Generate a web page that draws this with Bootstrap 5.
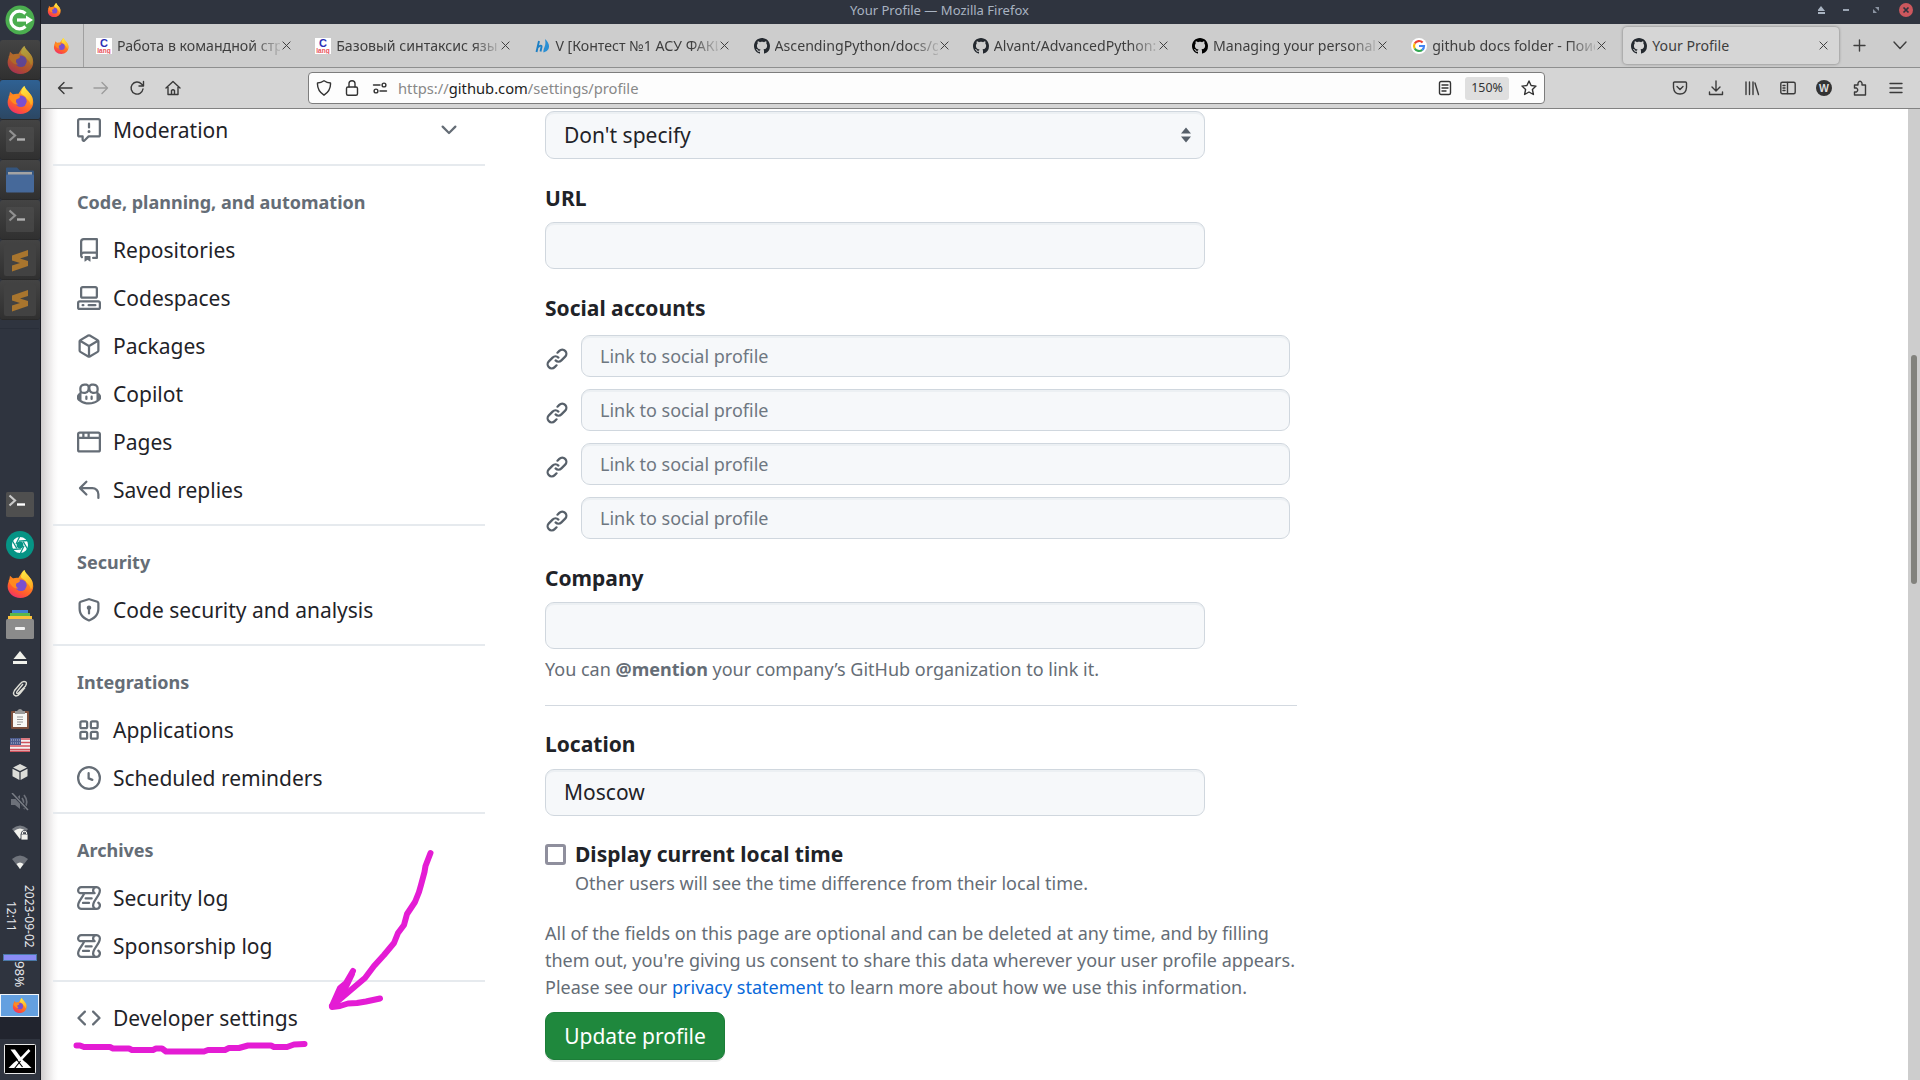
<!DOCTYPE html>
<html lang="en">
<head>
<meta charset="utf-8">
<title>Your Profile — Mozilla Firefox</title>
<link rel="stylesheet" href="https://cdn.jsdelivr.net/npm/bootstrap@5.3.0/dist/css/bootstrap.min.css">
<style>
html,body{height:1080px;overflow:hidden}
body{width:1920px;font-family:"Noto Sans",sans-serif;color:#1f2328;background:#fff}
svg{display:block;flex:none}
/* dock */
.dock{width:41px;padding-right:1px;background:#2f343f;border-right:1px solid #1b1d24;color:#e4e6ea}
.dock-slot{width:40px;height:40px}
.tile{background:linear-gradient(#444,#303030);border-radius:3px;border-bottom:1px solid #292929}
.tile.on{background:linear-gradient(#2f6193,#2c4763)}
.tile .dim{opacity:.6}
.dock-gap{height:172px;padding-top:8px}
.dock-gap::before{content:"";display:block;border-top:1px solid #292e39}
.t9{margin-top:9px}.t11{margin-top:11px}.t12{margin-top:12px}.t13{margin-top:13px}.t14{margin-top:14px}.t15{margin-top:15px}
.vert{writing-mode:vertical-rl;white-space:nowrap}
.clockbox{height:63px;margin-top:15px;font-size:12px;line-height:18px;width:40px}
.clockbox .vert{height:64px;text-align:center}
.meter{width:34px;height:7px;margin-top:7px;background:#8a8cf5;border:1px solid #4a79a8}
.batt{height:27px;font-size:13.3px;line-height:20px}
.task{width:39px;height:23px;margin-top:6px;background:#64a0e0;border:1px solid #f3f6fa}
.darkgap{width:40px;height:22px;background:#21242e}
.xlogo{margin-top:5px}
/* window chrome */
.titlebar{height:24px;background:#2f343f;color:#a9b3c1;font-size:13.05px;line-height:21px;padding-left:6px}
.titlebar .winicon{margin-top:3px}
.tabstrip{height:44px;background:#cdcdcd;border-bottom:1px solid #8e8f8f;color:#3e3e3e;font-size:14.15px}
.pinned{width:43px;height:43px;border-right:1px solid #a0a0a0;padding-right:3px}
.tabx{width:219.2px;height:43px;padding-left:12px;padding-right:5px}
.tab-title{margin:1px 2px 0 5px;width:163px;white-space:nowrap;overflow:hidden;line-height:24px;-webkit-mask-image:linear-gradient(90deg,#000 136px,transparent 168px)}
.tabx.now{width:216px;height:37px;background:#d6d6d6;border-radius:4px;box-shadow:0 0 3px #777;padding-left:8px;padding-right:11px;margin-left:5px}
.tabx.now .tab-title{-webkit-mask-image:none}
.toolbar{height:41px;background:#d5d5d5;border-bottom:1px solid #828282;color:#3a3a3a;padding-left:16px;padding-right:16px}
.urlbar{width:1237px;height:32px;background:#fdfdfd;border:1px solid #7d7d7d;border-radius:4px;margin-left:127px;font-size:14.72px;color:#888}
.urlbar b{font-weight:400;color:#1c1c1c}
.zoomchip{width:44px;height:23px;background:#dfdfdf;border-radius:3px;color:#333;font-size:12.4px;line-height:22px}
.ln{fill:none;stroke:currentColor;stroke-width:1.4;stroke-linecap:round;stroke-linejoin:round}
.faded{color:#9c9c9c}
.g20{margin-left:20px}
/* page */
.pagebody{height:971px;background:#fff}
.edge{width:17px;margin-right:-5px;background:linear-gradient(90deg,#cfcccc,#e4e2e2 35%,#f8f7f7 75%,#fff)}
.sidenav{width:432px;font-size:21px;color:#1f2328;margin-top:-3px}
.nav-row{height:48px;padding-left:24px;line-height:48px}
.nav-row svg{color:#656d76;margin-right:12px}
.nav-row .chev{margin:0 24px 0 auto}
.sep{height:2px;background:#e6eaee;margin-top:10px}
.dev{margin-top:12px}
.grp{height:60px;padding-left:24px;padding-top:22px;font-size:18px;line-height:28px;font-weight:700;color:#656d76}
.formcol{width:752px;margin-left:60px;padding-top:2px}
.formcol .form-label{font-size:21px;font-weight:700;line-height:32px;margin:23px 0 8px;display:block}
.formcol .form-control,.formcol .form-select{width:660px;height:47px;padding:0 18px 1px;font-size:21px;line-height:44px;color:#1f2328;background-color:#f6f8fa;border:1px solid #d0d7de;border-radius:9px;box-shadow:inset 0 2px 0 rgba(208,215,222,.25)}
.formcol .form-select{height:48px;padding-bottom:0;background-image:none;line-height:46px}
.social .form-control{width:709px;height:42px;padding-bottom:0;font-size:18px}
.social .form-control::placeholder{color:#6e7781;opacity:1}
.social svg{color:#57606a;margin:6px 12px 0 0}
.social{gap:12px}
.note18{font-size:18px;line-height:27px;color:#656d76}
.formcol .form-check-input{width:21px;height:21px;border:3px solid #8f8f9d;border-radius:3px;margin:0}
.btn.save{width:180px;height:48px;font-size:21px;line-height:44px;padding:0;background:#1f883d;border:1px solid #1c7d38;border-radius:9px;color:#fff;margin-top:11px;box-shadow:0 2px 0 rgba(31,35,40,.1)}
.rule{height:1px;background:#d3d9e0;margin-top:22px}
.scroller{width:12px;background:#cdcdcd}
.thumb{width:6px;height:229px;margin:246px 0 0 3px;background:#82827d;border-radius:3px}
.scribble{position:absolute;left:0;top:0;pointer-events:none}
</style>
<script src="https://cdn.jsdelivr.net/npm/bootstrap@5.3.0/dist/js/bootstrap.bundle.min.js"></script>
</head>
<body class="d-flex">
<svg width="0" height="0" class="position-absolute">
<defs>
<linearGradient id="fo" x1=".8" y1="0" x2=".3" y2="1"><stop offset="0" stop-color="#ffd43a"/><stop offset=".4" stop-color="#ff8a1e"/><stop offset=".75" stop-color="#ff5a2e"/><stop offset="1" stop-color="#f0306a"/></linearGradient>
<linearGradient id="fy" x1="0" y1="0" x2=".3" y2="1"><stop offset="0" stop-color="#fff04a"/><stop offset="1" stop-color="#ffb022"/></linearGradient>
<symbol id="fox" viewBox="0 0 32 32"><path d="M3 13C4 10 4.500 8 4.500 6.500L8.500 10C10 9 12 8.500 14 9C17 5 18 2 21 0C22 4 28 8 30 13C34 23 27 32 16.500 32C6 32-1 23 3 13Z" fill="url(#fo)"/><path d="M17 8C18 4 19 2 21 0C22 4 28 8 30 13C31 17 30 20 28.500 22C27 16 23 15 22 12C20 10 18 10 17 8Z" fill="url(#fy)"/><circle cx="17" cy="17.500" r="6.600" fill="#7a4fd0"/><path d="M3 12C7 9 12 8.500 16 12C16 14 14 14.500 12 15C11 17 11 19 14 21C10 22 5 18 3 12Z" fill="#ff8a20"/></symbol>
<symbol id="gh" viewBox="0 0 16 16"><path fill="currentColor" d="M8 0C3.580 0 0 3.580 0 8c0 3.540 2.290 6.530 5.470 7.590.4.070.55-.17.55-.38 0-.19-.01-.82-.01-1.490-2.010.37-2.530-.49-2.690-.94-.09-.23-.48-.94-.82-1.130-.28-.15-.68-.52-.01-.53.63-.01 1.080.58 1.230.82.72 1.210 1.870.87 2.330.66.07-.52.28-.87.51-1.070-1.780-.2-3.640-.89-3.640-3.950 0-.87.31-1.590.82-2.150-.08-.2-.36-1.020.08-2.120 0 0 .67-.21 2.200.82.64-.18 1.320-.27 2-.27s1.360.09 2 .27c1.530-1.040 2.200-.82 2.200-.82.44 1.100.16 1.920.08 2.120.51.56.82 1.270.82 2.150 0 3.070-1.870 3.750-3.650 3.950.29.25.54.73.54 1.480 0 1.070-.01 1.930-.01 2.200 0 .21.15.46.55.38A8.010 8.010 0 0 0 16 8c0-4.420-3.580-8-8-8Z"/></symbol>
<symbol id="x" viewBox="0 0 10 10"><path class="ln" style="stroke-width:1.1" d="M1 1L9 9M9 1L1 9"/></symbol>
<symbol id="clang" viewBox="0 0 16 16"><rect width="16" height="16" fill="#fff"/><text x="8" y="9" font-size="11" font-weight="700" text-anchor="middle" fill="#2b2fb5" font-family="Liberation Sans">C</text><text x="8" y="14.500" font-size="6.500" font-weight="700" text-anchor="middle" fill="#e8505a" font-family="Liberation Sans">lang</text></symbol>
<symbol id="term" viewBox="0 0 28 25"><rect width="28" height="25" rx="1.500" fill="#4f4f4f"/><path d="M3.500 3.500L9 8.500L3.500 13.500" fill="none" stroke="#c9c9c9" stroke-width="2.200"/><path d="M11 12.500H19" stroke="#fff" stroke-width="2.400"/></symbol>
<symbol id="subl" viewBox="0 0 32 32"><rect width="32" height="32" rx="2" fill="#424242"/><path d="M8 11.500L24 6V12L16 14.500L24 17V22L8 27.500V21.500L16 19L8 16.500Z" fill="#a8752e"/></symbol>
<symbol id="log" viewBox="0 0 16 16"><path fill="currentColor" d="M5 8.250a.75.75 0 0 1 .75-.75h4a.75.75 0 0 1 0 1.500h-4A.75.75 0 0 1 5 8.250ZM4 10.500A.75.75 0 0 0 4 12h4a.75.75 0 0 0 0-1.500H4Z M13-.005c1.654 0 3 1.328 3 3 0 .982-.338 1.933-.783 2.818-.443.879-1.028 1.758-1.582 2.588l-.011.017c-.568.853-1.104 1.659-1.501 2.446-.398.789-.623 1.494-.623 2.136a1.500 1.500 0 1 0 2.333-1.248.75.75 0 0 1 .834-1.246A3 3 0 0 1 13 16H3a3 3 0 0 1-3-3c0-1.582.891-3.135 1.777-4.506.209-.322.418-.637.623-.946.473-.709.923-1.386 1.287-2.048H2.510c-.576 0-1.381-.133-1.907-.783A2.680 2.680 0 0 1 0 2.995a3 3 0 0 1 3-3Zm0 1.500a1.500 1.500 0 0 0-1.500 1.500c0 .476.223.834.667 1.132A.75.75 0 0 1 11.750 5.500H5.368c-.467 1.003-1.141 2.015-1.773 2.963-.192.289-.381.571-.558.845C2.130 10.711 1.500 11.916 1.500 13A1.500 1.500 0 0 0 3 14.500h7.401A2.989 2.989 0 0 1 10 13c0-.979.338-1.928.784-2.812.441-.874 1.023-1.748 1.575-2.576l.017-.026c.568-.853 1.103-1.658 1.501-2.448.398-.79.623-1.497.623-2.143 0-.838-.669-1.500-1.500-1.500Zm-10 0a1.500 1.500 0 0 0-1.500 1.500c0 .321.1.569.27.778.097.12.325.227.74.227h7.674A2.737 2.737 0 0 1 10 2.995c0-.546.146-1.059.401-1.500Z"/></symbol>
<symbol id="link" viewBox="0 0 16 16"><path fill="currentColor" d="m7.775 3.275 1.250-1.250a3.500 3.500 0 1 1 4.950 4.950l-2.500 2.500a3.500 3.500 0 0 1-4.950 0 .751.751 0 0 1 .018-1.042.751.751 0 0 1 1.042-.018 1.998 1.998 0 0 0 2.830 0l2.500-2.500a2.002 2.002 0 0 0-2.830-2.830l-1.250 1.250a.751.751 0 0 1-1.042-.018.751.751 0 0 1-.018-1.042Zm-4.690 9.640a1.998 1.998 0 0 0 2.830 0l1.250-1.250a.751.751 0 0 1 1.042.018.751.751 0 0 1 .018 1.042l-1.250 1.250a3.500 3.500 0 1 1-4.950-4.950l2.500-2.500a3.500 3.500 0 0 1 4.950 0 .751.751 0 0 1-.018 1.042.751.751 0 0 1-1.042.018 1.998 1.998 0 0 0-2.830 0l-2.500 2.500a1.998 1.998 0 0 0 0 2.830Z"/></symbol>
</defs>
</svg>

<aside class="dock d-flex flex-column align-items-center flex-shrink-0">
<div class="dock-slot d-flex align-items-center justify-content-center"><svg width="30" height="30" viewBox="0 0 30 30"><circle cx="15" cy="15" r="14.500" fill="#4bae4f"/><path d="M20.500 8.500A8.800 8.800 0 1 0 20.500 21.500" fill="none" stroke="#fff" stroke-width="3.200"/><path d="M12 15H22" stroke="#fff" stroke-width="3.200"/><path d="M21 10.500L28 15L21 19.500Z" fill="#fff"/></svg></div>
<div class="dock-slot tile d-flex align-items-center justify-content-center"><svg class="dim" width="28" height="28"><use href="#fox"/></svg></div>
<div class="dock-slot tile on d-flex align-items-center justify-content-center"><svg width="28" height="28"><use href="#fox"/></svg></div>
<div class="dock-slot tile d-flex align-items-center justify-content-center"><svg class="dim" width="28" height="25"><use href="#term"/></svg></div>
<div class="dock-slot tile d-flex align-items-center justify-content-center"><svg width="28" height="26" viewBox="0 0 28 26"><path d="M0 1.500Q0 .5 1 .5H11L14 3.500H27Q28 3.500 28 4.500V12H0Z" fill="#35557d"/><rect x="2" y="5" width="24" height="5" fill="#a3a3a3"/><rect y="7.500" width="28" height="18" rx="1" fill="#46699a"/></svg></div>
<div class="dock-slot tile d-flex align-items-center justify-content-center"><svg class="dim" width="28" height="25"><use href="#term"/></svg></div>
<div class="dock-slot tile d-flex align-items-center justify-content-center"><svg width="32" height="32"><use href="#subl"/></svg></div>
<div class="dock-slot tile d-flex align-items-center justify-content-center"><svg width="32" height="32"><use href="#subl"/></svg></div>
<div class="dock-gap w-100"></div>
<svg width="28" height="25"><use href="#term"/></svg>
<svg class="t14" width="28" height="28" viewBox="0 0 28 28"><circle cx="14" cy="14" r="14" fill="#069485"/><circle cx="14" cy="14" r="5.700" fill="none" stroke="#fff" stroke-width="4.600"/><g stroke="#069485" stroke-width="1.300"><path d="M14 5L10 13"/><path d="M21.800 9.500L12.800 10.200"/><path d="M21.800 18.500L17.200 10.600"/><path d="M14 23L18 15"/><path d="M6.200 18.500L15.200 17.800"/><path d="M6.200 9.500L10.800 17.400"/></g></svg>
<svg class="t11" width="28" height="28"><use href="#fox"/></svg>
<svg class="t12" width="28" height="29" viewBox="0 0 28 29"><rect x="6" width="16" height="6" fill="#3f7fd0"/><rect x="4" y="3" width="20" height="6" fill="#5cb84a"/><rect x="2" y="6" width="24" height="6" fill="#fbc23c"/><rect y="9" width="28" height="20" rx="1.500" fill="#8b8b8b"/><rect x="9" y="17" width="10" height="3" rx="1" fill="#f2f2f2"/></svg>
<svg class="t12" width="14" height="14" viewBox="0 0 14 14" fill="#f0f0ea"><path d="M7 0L13.500 8H.5ZM0 10H14V13H0Z"/></svg>
<svg class="t15" width="16" height="17" viewBox="0 0 16 17"><path d="M11 4L5 11.500Q4 14 6 13.500L13.500 6Q16 1.500 12 1.500Q10 1.500 8 4L2.500 10.500Q0 15 4 16Q6 16 8 13.500L13 7.500" fill="none" stroke="#deded6" stroke-width="1.400"/></svg>
<svg class="t12" width="18" height="20" viewBox="0 0 18 20"><rect y="2" width="18" height="18" rx="1" fill="#7c4f3d"/><rect x="2" y="4" width="14" height="14" fill="#f7f7f5"/><path d="M4 2H6Q9-2 12 2H14V5H4Z" fill="#9a9a9a"/><path d="M6 8H12M6 10.500H12M6 13H12M6 15.500H10" stroke="#999"/></svg>
<svg class="t9" width="20" height="14" viewBox="0 0 20 14"><rect width="20" height="14" fill="#f4f0f0"/><path d="M0 1H20M0 4.500H20M0 8H20M0 11.500H20M0 13.500H20" stroke="#d0525c" stroke-width="1.500"/><rect width="11" height="7" fill="#4c5b8c"/><path d="M1 2H10M1 5H10" stroke="#b6bdd4" stroke-dasharray="1 1"/></svg>
<svg class="t12" width="16" height="16" viewBox="0 0 16 16"><path d="M8 0L15 3.500L8 7L1 3.500ZM.5 4.800L7.400 8.200V16L.5 12.300ZM15.500 4.800L8.600 8.200V16L15.500 12.300Z" fill="#dcdcd8"/></svg>
<svg class="t13" width="18" height="18" viewBox="0 0 18 18"><path d="M0 6H4L9 2V16L4 12H0Z" fill="#6d717a"/><path d="M11 5Q14 9 11 13M13 2Q18.500 9 13 16" fill="none" stroke="#6d717a" stroke-width="1.700"/><path d="M1 0L17 17" stroke="#2f343f" stroke-width="3"/><path d="M1 0L17 17" stroke="#7a7e86" stroke-width="1.500"/></svg>
<svg class="t14" width="16" height="16" viewBox="0 0 16 16"><path d="M0 4Q8-3 16 4L8 14Z" fill="#777b82"/><path d="M2 6Q8 1 14 6L8 14Z" fill="#f3f3ef"/><rect x="9" y="9" width="7" height="6" fill="#f3f3ef" stroke="#2f343f" stroke-width=".8"/><path d="M10.500 9V7.500Q12.500 5 14.500 7.500V9" fill="none" stroke="#2f343f" stroke-width="2.600"/><path d="M10.500 9V7.500Q12.500 5 14.500 7.500V9" fill="none" stroke="#f3f3ef" stroke-width="1.200"/></svg>
<svg class="t14" width="16" height="14" viewBox="0 0 16 14"><path d="M0 4Q8-3 16 4L8 14Z" fill="#6f737b"/><path d="M4.500 9Q8 6 11.500 9L8 14Z" fill="#f3f3ef"/></svg>
<div class="clockbox d-flex justify-content-center"><div class="vert">12:11</div><div class="vert">2023-09-02</div></div>
<div class="meter"></div>
<div class="vert batt">98%</div>
<div class="task d-flex align-items-center justify-content-center"><svg width="15" height="15"><use href="#fox"/></svg></div>
<div class="darkgap"></div>
<svg width="32" height="30" class="xlogo" viewBox="0 0 32 30"><rect x=".5" y=".5" width="31" height="29" rx="1" fill="#000" stroke="#e8e8e8"/><path d="M4.500 24Q10 18 16 14Q22 18 27.500 24Z" fill="#fff"/><path d="M25.500 6L16 16" fill="none" stroke="#fff" stroke-width="2.600"/><path d="M6.500 5.500H11L22.500 21L18.500 22Z" fill="#fff"/><path d="M16.500 17L10.500 24.500M11.500 14L18.500 23" stroke="#000" stroke-width="1.200"/></svg>
</aside>

<div class="flex-grow-1 d-flex flex-column" style="min-width:0">
<header class="titlebar d-flex">
<svg class="winicon" width="14" height="14"><use href="#fox"/></svg>
<div class="flex-grow-1 text-center">Your Profile — Mozilla Firefox</div>
<svg width="102" height="22" viewBox="1818 0 102 22"><path d="M1821 6L1825 11H1817ZM1817 12H1825V14H1817Z" fill="#a9b3c1"/><path d="M1843 10H1849" stroke="#a9b3c1" stroke-width="1.800"/><path d="M1875 7H1879V11ZM1873 9V13H1877Z" fill="#8b93a1"/><circle cx="1906" cy="10" r="7" fill="#cc575d"/><path d="M1903.500 7.500L1908.500 12.500M1908.500 7.500L1903.500 12.500" stroke="#2f343f" stroke-width="1.700"/></svg>
</header>

<nav class="tabstrip d-flex align-items-center">
<div class="pinned d-flex align-items-center justify-content-center"><svg width="16" height="16"><use href="#fox"/></svg></div>
<div class="tabx d-flex align-items-center"><svg width="16" height="16"><use href="#clang"/></svg><span class="tab-title">Работа в командной стр</span><svg width="9" height="9"><use href="#x"/></svg></div>
<div class="tabx d-flex align-items-center"><svg width="16" height="16"><use href="#clang"/></svg><span class="tab-title">Базовый синтаксис язы</span><svg width="9" height="9"><use href="#x"/></svg></div>
<div class="tabx d-flex align-items-center"><svg width="16" height="16" viewBox="0 0 16 16"><path d="M5 3L2.500 14M3.500 9.500Q8 6 7.500 9L6.500 13.500" fill="none" stroke="#1c7fc4" stroke-width="1.900"/><path d="M11 1Q16.500 6 14.500 11Q13 14 9.500 14.500Q9 12 10.500 9Q12 6 11 1Z" fill="#2a8fd4"/></svg><span class="tab-title">V [Контест №1 АСУ ФАКИ</span><svg width="9" height="9"><use href="#x"/></svg></div>
<div class="tabx d-flex align-items-center"><svg width="16" height="16" color="#24292f"><use href="#gh"/></svg><span class="tab-title">AscendingPython/docs/g</span><svg width="9" height="9"><use href="#x"/></svg></div>
<div class="tabx d-flex align-items-center"><svg width="16" height="16" color="#24292f"><use href="#gh"/></svg><span class="tab-title">Alvant/AdvancedPython:</span><svg width="9" height="9"><use href="#x"/></svg></div>
<div class="tabx d-flex align-items-center"><svg width="16" height="16" color="#000"><use href="#gh"/></svg><span class="tab-title">Managing your personal</span><svg width="9" height="9"><use href="#x"/></svg></div>
<div class="tabx d-flex align-items-center"><svg width="16" height="16" viewBox="0 0 16 16"><circle cx="8" cy="8" r="8" fill="#fff"/><g fill="none" stroke-width="2.200"><path d="M11.600 4.500A5 5 0 0 0 3.700 5.500" stroke="#ea4335"/><path d="M3.700 5.500A5 5 0 0 0 3.700 10.500" stroke="#fbbc05"/><path d="M3.700 10.500A5 5 0 0 0 11.300 11.800" stroke="#34a853"/><path d="M11.300 11.800A5 5 0 0 0 13 8H8" stroke="#4285f4"/></g></svg><span class="tab-title">github docs folder - Поис</span><svg width="9" height="9"><use href="#x"/></svg></div>
<div class="tabx now d-flex align-items-center"><svg width="16" height="16" color="#24292f"><use href="#gh"/></svg><span class="tab-title">Your Profile</span><svg class="ms-auto" width="9" height="9"><use href="#x"/></svg></div>
<svg class="ln" style="margin-left:14px" width="13" height="13" viewBox="0 0 13 13"><path d="M6.500 1V12M1 6.500H12"/></svg>
<svg class="ln ms-auto" style="margin-right:13px" width="14" height="9" viewBox="0 0 14 9"><path d="M1 1L7 7.500L13 1"/></svg>
</nav>

<div class="toolbar d-flex align-items-center">
<svg class="ln" width="16" height="16" viewBox="0 0 16 16"><path d="M15 8H1.500M7 2.500L1.500 8L7 13.500"/></svg>
<svg class="ln g20 faded" width="16" height="16" viewBox="0 0 16 16"><path d="M1 8H14.500M9 2.500L14.500 8L9 13.500"/></svg>
<svg class="ln g20" width="16" height="16" viewBox="0 0 16 16"><path d="M14 9A6 6 0 1 1 12.500 4L14 5.500M14.500 1.500V6H10"/></svg>
<svg class="ln g20" width="16" height="16" viewBox="0 0 16 16"><path d="M1 8L8 1.500L15 8M3 7V14.500H13V7M6.500 14.500V10.500Q8 9 9.500 10.500V14.500"/></svg>
<div class="urlbar d-flex align-items-center">
<svg class="ln" style="margin-left:7px;color:#333" width="16" height="16" viewBox="0 0 16 16"><path d="M8 .8Q11 3 14.500 3Q15 10.500 8 15.200Q1 10.500 1.500 3Q5 3 8 .8Z"/></svg>
<svg class="ln" style="margin-left:12px;color:#333" width="16" height="16" viewBox="0 0 16 16"><rect x="2.500" y="7" width="11" height="8.300" rx="1.500"/><path d="M5 7V3.500Q5 .7 8 .7Q11 .7 11 3.500V7"/></svg>
<svg class="ln" style="margin-left:12px;color:#333" width="16" height="16" viewBox="0 0 16 16"><path d="M1.500 5H8M8 11H14.500"/><circle cx="12" cy="5" r="1.900"/><circle cx="4" cy="11" r="1.900"/></svg>
<span style="margin-left:10px">https://<b>github.com</b>/settings/profile</span>
<svg class="ln ms-auto" style="color:#333" width="14" height="16" viewBox="0 0 14 16"><rect x="1.500" y="1.500" width="11" height="13" rx="1.500"/><path d="M4 5H10M4 8H10M4 11H8"/></svg>
<div class="zoomchip text-center" style="margin-left:13px">150%</div>
<svg class="ln" style="margin:0 7px 0 12px;color:#333" width="16" height="16" viewBox="0 0 16 16"><path d="M8 1L10.100 5.500L15 6.100L11.400 9.500L12.400 14.500L8 12L3.600 14.500L4.600 9.500L1 6.100L5.900 5.500Z"/></svg>
</div>
<div class="d-flex ms-auto" style="gap:20px">
<svg class="ln" width="16" height="16" viewBox="0 0 16 16"><path d="M1.500 3Q1.500 2 2.500 2H13.500Q14.500 2 14.500 3V7.500Q14 14 8 14Q2 14 1.500 7.500ZM5 6.500L8 9.500L11 6.500"/></svg>
<svg class="ln" width="16" height="16" viewBox="0 0 16 16"><path d="M8 1V10.500M4 7L8 11L12 7M1.500 12V14.500H14.500V12"/></svg>
<svg class="ln" width="16" height="16" viewBox="0 0 16 16"><path d="M2 2V14.500M5.500 2V14.500M9 2V14.500M11 3L14.500 14.500"/></svg>
<svg class="ln" width="16" height="16" viewBox="0 0 16 16"><rect x=".8" y="2.200" width="14.400" height="11.600" rx="1.500"/><path d="M7.500 2.500V13.500M3 5.500H5M3 8H5M3 10.500H5"/></svg>
<svg width="16" height="16" viewBox="0 0 16 16"><circle cx="8" cy="8" r="8" fill="#333"/><text x="8" y="12" font-size="10.500" font-weight="700" text-anchor="middle" fill="#dcdcdc" font-family="Liberation Sans">W</text></svg>
<svg class="ln" width="16" height="16" viewBox="0 0 16 16"><path d="M2.500 5H6V3Q8-.5 10 3V5H13.500V15H2.500V12H4.500Q7 10 4.500 8H2.500Z"/></svg>
<svg class="ln" width="16" height="16" viewBox="0 0 16 16"><path d="M2 3.500H14M2 8H14M2 12.500H14"/></svg>
</div>
</div>

<main class="pagebody d-flex overflow-hidden">
<div class="edge flex-shrink-0"></div>
<nav class="sidenav flex-shrink-0">
<div class="nav-row d-flex align-items-center"><svg width="24" height="24" viewBox="0 0 16 16" fill="currentColor"><path d="M0 1.750C0 .784.784 0 1.750 0h12.500C15.216 0 16 .784 16 1.750v9.500A1.750 1.750 0 0 1 14.250 13H8.060l-2.573 2.573A1.458 1.458 0 0 1 3 14.543V13H1.750A1.750 1.750 0 0 1 0 11.250Zm1.750-.25a.25.25 0 0 0-.25.25v9.500c0 .138.112.25.25.25h2a.75.75 0 0 1 .75.75v2.190l2.720-2.720a.749.749 0 0 1 .53-.22h6.500a.25.25 0 0 0 .25-.25v-9.500a.25.25 0 0 0-.25-.25Zm7 2.250v2.500a.75.75 0 0 1-1.500 0v-2.500a.75.75 0 0 1 1.500 0ZM9 9a1 1 0 1 1-2 0 1 1 0 0 1 2 0Z"/></svg>Moderation<svg class="chev" width="24" height="24" viewBox="0 0 16 16" fill="currentColor"><path d="M12.780 5.220a.749.749 0 0 1 0 1.060l-4.250 4.250a.749.749 0 0 1-1.060 0L3.220 6.280a.749.749 0 1 1 1.060-1.060L8 8.939l3.720-3.719a.749.749 0 0 1 1.060 0Z"/></svg></div>
<div class="sep"></div><div class="grp">Code, planning, and automation</div>
<div class="nav-row d-flex align-items-center"><svg width="24" height="24" viewBox="0 0 16 16" fill="currentColor"><path d="M2 2.500A2.500 2.500 0 0 1 4.500 0h8.750a.75.75 0 0 1 .75.75v12.500a.75.75 0 0 1-.75.75h-2.500a.75.75 0 0 1 0-1.500h1.750v-2h-8a1 1 0 0 0-.714 1.700.75.75 0 1 1-1.072 1.050A2.495 2.495 0 0 1 2 11.500Zm10.500-1h-8a1 1 0 0 0-1 1v6.708A2.486 2.486 0 0 1 4.500 9h8ZM5 12.250a.25.25 0 0 1 .25-.25h3.500a.25.25 0 0 1 .25.25v3.250a.25.25 0 0 1-.4.2l-1.450-1.087a.249.249 0 0 0-.3 0L5.400 15.700a.25.25 0 0 1-.4-.2Z"/></svg>Repositories</div>
<div class="nav-row d-flex align-items-center"><svg width="24" height="24" viewBox="0 0 16 16" fill="currentColor"><path d="M0 11.250c0-.966.784-1.750 1.750-1.750h12.500c.966 0 1.750.784 1.750 1.750v3A1.750 1.750 0 0 1 14.250 16H1.750A1.750 1.750 0 0 1 0 14.250Zm2-9.500C2 .784 2.784 0 3.750 0h8.500C13.216 0 14 .784 14 1.750v5a1.750 1.750 0 0 1-1.750 1.750h-8.500A1.750 1.750 0 0 1 2 6.750Zm1.750-.25a.25.25 0 0 0-.25.25v5c0 .138.112.25.25.25h8.500a.25.25 0 0 0 .25-.25v-5a.25.25 0 0 0-.25-.25Zm-2 9.500a.25.25 0 0 0-.25.25v3c0 .138.112.25.25.25h12.500a.25.25 0 0 0 .25-.25v-3a.25.25 0 0 0-.25-.25Z M7 12.750a.75.75 0 0 1 .75-.75h4.500a.75.75 0 0 1 0 1.500h-4.500a.75.75 0 0 1-.75-.75Zm-4 0a.75.75 0 0 1 .75-.75h.5a.75.75 0 0 1 0 1.500h-.5a.75.75 0 0 1-.75-.75Z"/></svg>Codespaces</div>
<div class="nav-row d-flex align-items-center"><svg width="24" height="24" viewBox="0 0 16 16" fill="currentColor"><path d="m8.878.392 5.250 3.045c.54.314.872.89.872 1.514v6.098a1.750 1.750 0 0 1-.872 1.514l-5.250 3.045a1.750 1.750 0 0 1-1.756 0l-5.250-3.045A1.750 1.750 0 0 1 1 11.049V4.951c0-.624.332-1.201.872-1.514L7.122.392a1.750 1.750 0 0 1 1.756 0ZM7.875 1.690l-4.630 2.685L8 7.133l4.755-2.758-4.630-2.685a.248.248 0 0 0-.25 0ZM2.500 5.677v5.372c0 .09.047.171.125.216l4.625 2.683V8.432Zm6.250 8.271 4.625-2.683a.25.25 0 0 0 .125-.216V5.677L8.750 8.432Z"/></svg>Packages</div>
<div class="nav-row d-flex align-items-center"><svg width="24" height="24" viewBox="0 0 16 16" fill="currentColor" fill-rule="evenodd"><path d="M7.998 15.035c-4.562 0-7.873-2.914-7.998-3.749V9.338c.085-.628.677-1.686 1.588-2.065.013-.07.024-.143.036-.218.029-.183.06-.384.126-.612-.201-.508-.254-1.084-.254-1.656 0-.87.128-1.769.693-2.484.579-.733 1.494-1.124 2.724-1.261 1.206-.134 2.262.034 2.944.765.05.053.096.108.139.165.044-.057.094-.112.143-.165.682-.731 1.738-.899 2.944-.765 1.230.137 2.145.528 2.724 1.261.566.715.693 1.614.693 2.484 0 .572-.053 1.148-.254 1.656.066.228.098.429.126.612.012.076.024.148.037.218.924.385 1.522 1.471 1.591 2.095v1.872c0 .766-3.351 3.795-8.002 3.795Zm0-1.485c2.280 0 4.584-1.110 5.002-1.433V7.862l-.023-.116c-.49.21-1.075.291-1.727.291-1.146 0-2.059-.327-2.710-.991A3.222 3.222 0 0 1 8 6.303a3.240 3.240 0 0 1-.544.743c-.65.664-1.563.991-2.710.991-.652 0-1.236-.081-1.727-.291l-.023.116v4.255c.419.323 2.722 1.433 5.002 1.433ZM6.762 2.830c-.193-.206-.637-.413-1.682-.297-1.019.113-1.479.404-1.713.7-.247.312-.369.789-.369 1.554 0 .793.129 1.171.308 1.371.162.181.519.379 1.442.379.853 0 1.339-.235 1.638-.54.315-.322.527-.827.617-1.553.117-.935-.037-1.395-.241-1.614Zm4.155-.297c-1.044-.116-1.488.091-1.681.297-.204.219-.359.679-.242 1.614.091.726.303 1.231.618 1.553.299.305.784.54 1.638.54.922 0 1.280-.198 1.442-.379.179-.2.308-.578.308-1.371 0-.765-.123-1.242-.37-1.554-.233-.296-.693-.587-1.713-.7Z"/><path d="M6.250 9.037a.75.75 0 0 1 .75.75v1.501a.75.75 0 0 1-1.500 0V9.787a.75.75 0 0 1 .75-.75Zm4.250.75v1.501a.75.75 0 0 1-1.500 0V9.787a.75.75 0 0 1 1.500 0Z"/></svg>Copilot</div>
<div class="nav-row d-flex align-items-center"><svg width="24" height="24" viewBox="0 0 16 16" fill="currentColor"><path d="M0 2.750C0 1.784.784 1 1.750 1h12.500c.966 0 1.750.784 1.750 1.750v10.500A1.750 1.750 0 0 1 14.250 15H1.750A1.750 1.750 0 0 1 0 13.250ZM14.500 6h-13v7.250c0 .138.112.25.25.25h12.500a.25.25 0 0 0 .25-.25Zm-6-3.500v2h6V2.750a.25.25 0 0 0-.25-.25ZM5 2.500v2h2v-2Zm-3.250 0a.25.25 0 0 0-.25.25V4.500h2v-2Z"/></svg>Pages</div>
<div class="nav-row d-flex align-items-center"><svg width="24" height="24" viewBox="0 0 16 16" fill="currentColor"><path d="M6.780 1.970a.75.75 0 0 1 0 1.060L3.810 6h6.440A4.750 4.750 0 0 1 15 10.750v2.500a.75.75 0 0 1-1.500 0v-2.500a3.250 3.250 0 0 0-3.250-3.250H3.810l2.970 2.970a.749.749 0 0 1-.326 1.275.749.749 0 0 1-.734-.215L1.470 7.280a.75.75 0 0 1 0-1.060l4.250-4.250a.75.75 0 0 1 1.060 0Z"/></svg>Saved replies</div>
<div class="sep"></div><div class="grp">Security</div>
<div class="nav-row d-flex align-items-center"><svg width="24" height="24" viewBox="0 0 16 16" fill="currentColor"><path d="m8.533.133 5.250 1.680A1.750 1.750 0 0 1 15 3.480V7c0 1.566-.32 3.182-1.303 4.682-.983 1.498-2.585 2.813-5.032 3.855a1.697 1.697 0 0 1-1.330 0c-2.447-1.042-4.049-2.357-5.032-3.855C1.320 10.182 1 8.566 1 7V3.480a1.750 1.750 0 0 1 1.217-1.667l5.250-1.680a1.748 1.748 0 0 1 1.066 0Zm-.61 1.429.001.001-5.250 1.680a.251.251 0 0 0-.174.237V7c0 1.360.275 2.666 1.057 3.859.784 1.194 2.121 2.342 4.366 3.298a.196.196 0 0 0 .154 0c2.245-.957 3.582-2.103 4.366-3.297C13.225 9.666 13.500 8.358 13.500 7V3.480a.25.25 0 0 0-.174-.238l-5.250-1.680a.25.25 0 0 0-.153 0ZM9.500 6.500c0 .536-.286 1.032-.75 1.300v2.450a.75.75 0 0 1-1.500 0V7.800A1.500 1.500 0 1 1 9.500 6.500Z"/></svg>Code security and analysis</div>
<div class="sep"></div><div class="grp">Integrations</div>
<div class="nav-row d-flex align-items-center"><svg width="24" height="24" viewBox="0 0 16 16" fill="none" stroke="currentColor" stroke-width="1.500"><rect x="2.250" y="2.250" width="4.500" height="4.500" rx="1"/><rect x="9.250" y="2.250" width="4.500" height="4.500" rx="1"/><rect x="2.250" y="9.250" width="4.500" height="4.500" rx="1"/><rect x="9.250" y="9.250" width="4.500" height="4.500" rx="1"/></svg>Applications</div>
<div class="nav-row d-flex align-items-center"><svg width="24" height="24" viewBox="0 0 16 16" fill="currentColor"><path d="M8 0a8 8 0 1 1 0 16A8 8 0 0 1 8 0ZM1.500 8a6.500 6.500 0 1 0 13 0 6.500 6.500 0 0 0-13 0Zm7-3.250v2.992l2.028.812a.75.75 0 0 1-.557 1.392l-2.500-1A.751.751 0 0 1 7 8.250v-3.500a.75.75 0 0 1 1.500 0Z"/></svg>Scheduled reminders</div>
<div class="sep"></div><div class="grp">Archives</div>
<div class="nav-row d-flex align-items-center"><svg width="24" height="24"><use href="#log"/></svg>Security log</div>
<div class="nav-row d-flex align-items-center"><svg width="24" height="24"><use href="#log"/></svg>Sponsorship log</div>
<div class="sep"></div>
<div class="nav-row dev d-flex align-items-center"><svg width="24" height="24" viewBox="0 0 16 16" fill="currentColor"><path d="m11.280 3.220 4.250 4.250a.75.75 0 0 1 0 1.060l-4.250 4.250a.749.749 0 0 1-1.275-.326.749.749 0 0 1 .215-.734L13.940 8l-3.720-3.720a.749.749 0 0 1 .326-1.275.749.749 0 0 1 .734.215Zm-6.560 0a.751.751 0 0 1 1.042.018.751.751 0 0 1 .018 1.042L2.060 8l3.720 3.720a.749.749 0 0 1-.326 1.275.749.749 0 0 1-.734-.215L.47 8.530a.75.75 0 0 1 0-1.060Z"/></svg>Developer settings</div>
</nav>

<form class="formcol flex-shrink-0">
<div class="form-select d-flex align-items-center justify-content-between">Don't specify<svg width="12" height="16" viewBox="0 0 12 16" style="margin-right:-6px" fill="#57606a"><path d="M6 .5L11 6.500H1ZM6 15.500L11 9.500H1Z"/></svg></div>
<label class="form-label">URL</label>
<input class="form-control" type="text">
<label class="form-label" style="margin-bottom:11px">Social accounts</label>
<div class="social d-flex flex-column">
<div class="d-flex align-items-center"><svg width="24" height="24"><use href="#link"/></svg><input class="form-control" placeholder="Link to social profile"></div>
<div class="d-flex align-items-center"><svg width="24" height="24"><use href="#link"/></svg><input class="form-control" placeholder="Link to social profile"></div>
<div class="d-flex align-items-center"><svg width="24" height="24"><use href="#link"/></svg><input class="form-control" placeholder="Link to social profile"></div>
<div class="d-flex align-items-center"><svg width="24" height="24"><use href="#link"/></svg><input class="form-control" placeholder="Link to social profile"></div>
</div>
<label class="form-label">Company</label>
<input class="form-control" type="text">
<div class="note18" style="margin-top:7px">You can <strong>@mention</strong> your company’s GitHub organization to link it.</div>
<div class="rule"></div>
<label class="form-label" style="margin-top:22px;margin-bottom:9px">Location</label>
<input class="form-control" type="text" value="Moscow">
<div class="d-flex align-items-center" style="margin-top:22px;height:32px"><input class="form-check-input" type="checkbox"><label class="form-label m-0" style="padding-left:9px">Display current local time</label></div>
<div class="note18" style="padding-left:30px">Other users will see the time difference from their local time.</div>
<p class="note18 mb-0" style="margin-top:23px">All of the fields on this page are optional and can be deleted at any time, and by filling<br>them out, you're giving us consent to share this data wherever your user profile appears.<br>Please see our <a href="#" class="text-decoration-none" style="color:#0969da">privacy statement</a> to learn more about how we use this information.</p>
<button type="button" class="btn save">Update profile</button>
</form>
<div class="scroller ms-auto flex-shrink-0"><div class="thumb"></div></div>
</main>
</div>

<svg class="scribble" width="500" height="1080" fill="none" stroke="#e41cd4" stroke-width="6" stroke-linecap="round" stroke-linejoin="round"><path d="M430.500 853L425.500 866L424.500 872L421 885L419 892L415 902L407 914L404 925L398 933L394 943L384 955L374 966L365 978L352 989L332 1006"/><path d="M353 971L346 983L340 988L332 1006L342 995L352 974"/><path d="M332 1007L340 1006L348 1003.500L357 1003L366 1001.500L380 998.500"/><path d="M76.500 1045.500H80L84 1047H110L113 1048.500H129L132 1050H153L156 1048.500H162L166 1051.500H204L208 1050H225L229 1048H239L248 1045.500H271L274 1047H287L294 1044.500L304.500 1044"/></svg>
</body>
</html>
